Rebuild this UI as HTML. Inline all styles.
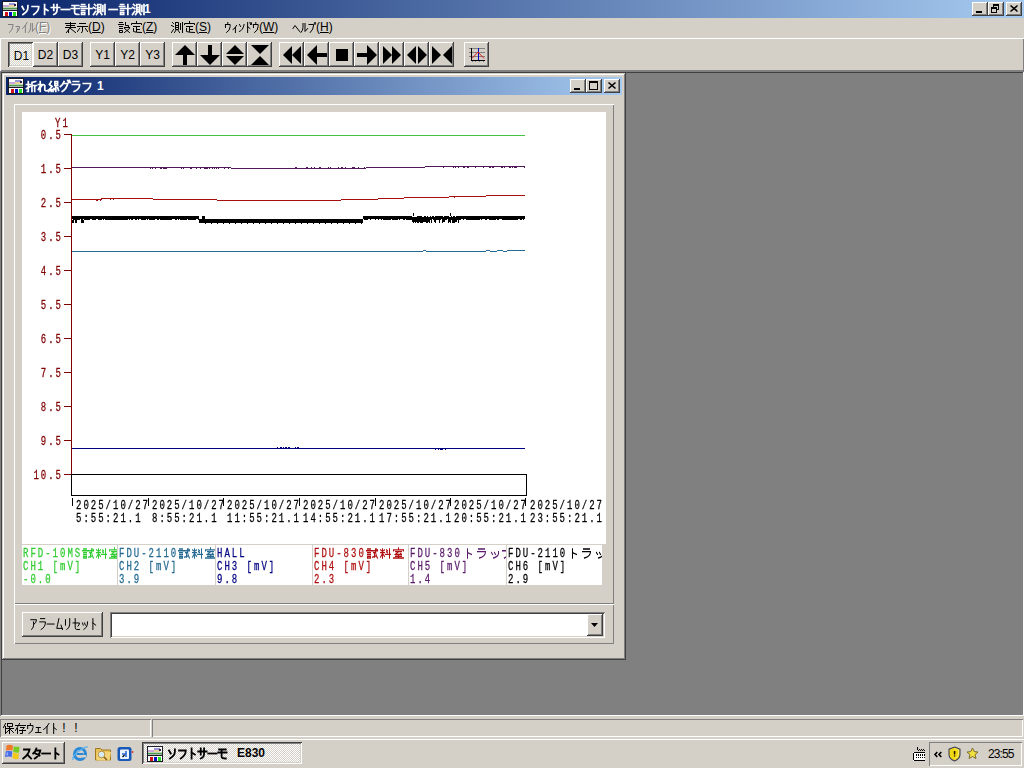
<!DOCTYPE html>
<html><head><meta charset="utf-8">
<style>
*{box-sizing:border-box;margin:0;padding:0}
html,body{width:1024px;height:768px;overflow:hidden;background:#808080;font-family:"Liberation Sans",sans-serif;font-size:12px;color:#000}
div,svg{position:absolute}
.g{display:inline-block;position:relative;vertical-align:top;overflow:visible}
.jf{display:inline-block;position:relative;text-align:center;vertical-align:top;overflow:visible;line-height:inherit;font-family:"Liberation Sans",sans-serif;letter-spacing:0}
.rb{background:#d4d0c8;box-shadow:inset -1px -1px #404040,inset 1px 1px #fff,inset -2px -2px #808080,inset 2px 2px #d4d0c8}
.pb{background-color:#fff;background-image:linear-gradient(45deg,#d4d0c8 25%,transparent 25%,transparent 75%,#d4d0c8 75%),linear-gradient(45deg,#d4d0c8 25%,transparent 25%,transparent 75%,#d4d0c8 75%);background-size:2px 2px;background-position:0 0,1px 1px;box-shadow:inset 1px 1px #404040,inset -1px -1px #fff,inset 2px 2px #808080,inset -2px -2px #d4d0c8}
.t{white-space:nowrap;line-height:1}
.mono{font-family:"Liberation Mono",monospace;font-size:9px;letter-spacing:2px;-webkit-text-stroke:0.2px currentColor;white-space:pre;line-height:9.4px;transform:scaleY(1.39);transform-origin:0 0;margin-top:1px}
.j{letter-spacing:3px}
</style></head><body>

<div style="position:absolute;left:0px;top:0px;width:1024px;height:18px;background:linear-gradient(to right,#0a246a,#a6caf0)"></div>
<svg style="position:absolute;left:2px;top:1px;" width="16" height="16" viewBox="0 0 16 16" shape-rendering="crispEdges"><rect x="0" y="0" width="16" height="16" fill="#1c1c28"/><rect x="1" y="1" width="14" height="6" fill="#ffffff"/><rect x="1" y="4" width="7" height="2" fill="#c8a8d8"/><rect x="7" y="2" width="6" height="2" fill="#9898d8"/><rect x="7" y="4" width="6" height="2" fill="#e8d098"/><rect x="12" y="3" width="2" height="2" fill="#302050"/><rect x="1" y="6" width="14" height="1" fill="#b8d8b0"/><rect x="1" y="7" width="14" height="1" fill="#509850"/><rect x="1" y="8" width="14" height="1" fill="#a8b8a8"/><rect x="1" y="10" width="14" height="5" fill="#ffffff"/><rect x="3" y="11" width="3" height="4" fill="#d01010"/><rect x="7" y="11" width="3" height="4" fill="#0010c0"/><rect x="11" y="11" width="3" height="4" fill="#20e020"/></svg>
<div class="t" style="left:20px;top:3px;color:#fff;font-weight:bold;font-size:12px;line-height:12px"><svg class="g" width="10" height="12" viewBox="0 0 12 12" preserveAspectRatio="none" style="top:0px"><path d="M2 3L4 6M9 2V4Q9 8 3 11" transform="translate(0.5 0.5)" fill="none" stroke="currentColor" stroke-width="1.7" vector-effect="non-scaling-stroke" stroke-linecap="square"/></svg><svg class="g" width="10" height="12" viewBox="0 0 12 12" preserveAspectRatio="none" style="top:0px"><path d="M2 3H10Q10 8 4 11" transform="translate(0.5 0.5)" fill="none" stroke="currentColor" stroke-width="1.7" vector-effect="non-scaling-stroke" stroke-linecap="square"/></svg><svg class="g" width="10" height="12" viewBox="0 0 12 12" preserveAspectRatio="none" style="top:0px"><path d="M5 1V11M5 5L9 7" transform="translate(0.5 0.5)" fill="none" stroke="currentColor" stroke-width="1.7" vector-effect="non-scaling-stroke" stroke-linecap="square"/></svg><svg class="g" width="10" height="12" viewBox="0 0 12 12" preserveAspectRatio="none" style="top:0px"><path d="M1 4H11M4 1V7M8 1V6Q8 10 4 11" transform="translate(0.5 0.5)" fill="none" stroke="currentColor" stroke-width="1.7" vector-effect="non-scaling-stroke" stroke-linecap="square"/></svg><svg class="g" width="10" height="12" viewBox="0 0 12 12" preserveAspectRatio="none" style="top:0px"><path d="M1 6H11" transform="translate(0.5 0.5)" fill="none" stroke="currentColor" stroke-width="1.7" vector-effect="non-scaling-stroke" stroke-linecap="square"/></svg><svg class="g" width="10" height="12" viewBox="0 0 12 12" preserveAspectRatio="none" style="top:0px"><path d="M2 2H10M1 5H11M5 2V9Q5 11 10 11" transform="translate(0.5 0.5)" fill="none" stroke="currentColor" stroke-width="1.7" vector-effect="non-scaling-stroke" stroke-linecap="square"/></svg><svg class="g" width="12.5" height="12" viewBox="0 0 12 12" preserveAspectRatio="none" style="top:0px"><path d="M1 1H4M0 3H5M1 5H4M1 7H4M1 9H4V11H1V9M5 5H11M8 1V11" transform="translate(0.5 0.5)" fill="none" stroke="currentColor" stroke-width="1.7" vector-effect="non-scaling-stroke" stroke-linecap="square"/></svg><svg class="g" width="12.5" height="12" viewBox="0 0 12 12" preserveAspectRatio="none" style="top:0px"><path d="M1 1L2 2M0 4L2 5M0 11L2 8M4 1H7V8H4V1M4 4H7M4 6H7M5 8L3 11M6 8L8 11M9 2V8M11 1V11" transform="translate(0.5 0.5)" fill="none" stroke="currentColor" stroke-width="1.7" vector-effect="non-scaling-stroke" stroke-linecap="square"/></svg><svg class="g" width="14" height="12" viewBox="0 0 12 12" preserveAspectRatio="none" style="top:0px"><path d="M3 6H10" transform="translate(0.5 0.5)" fill="none" stroke="currentColor" stroke-width="1.7" vector-effect="non-scaling-stroke" stroke-linecap="square"/></svg><svg class="g" width="12.5" height="12" viewBox="0 0 12 12" preserveAspectRatio="none" style="top:0px"><path d="M1 1H4M0 3H5M1 5H4M1 7H4M1 9H4V11H1V9M5 5H11M8 1V11" transform="translate(0.5 0.5)" fill="none" stroke="currentColor" stroke-width="1.7" vector-effect="non-scaling-stroke" stroke-linecap="square"/></svg><svg class="g" width="12.5" height="12" viewBox="0 0 12 12" preserveAspectRatio="none" style="top:0px"><path d="M1 1L2 2M0 4L2 5M0 11L2 8M4 1H7V8H4V1M4 4H7M4 6H7M5 8L3 11M6 8L8 11M9 2V8M11 1V11" transform="translate(0.5 0.5)" fill="none" stroke="currentColor" stroke-width="1.7" vector-effect="non-scaling-stroke" stroke-linecap="square"/></svg>1</div>
<div class="rb" style="left:972px;top:2px;width:16px;height:14px;"></div>
<svg style="position:absolute;left:972px;top:2px;" width="16" height="14" viewBox="0 0 16 14" shape-rendering="crispEdges"><rect x="4" y="9" width="6" height="2" fill="#000"/></svg>
<div class="rb" style="left:988px;top:2px;width:16px;height:14px;"></div>
<svg style="position:absolute;left:988px;top:2px;" width="16" height="14" viewBox="0 0 16 14" shape-rendering="crispEdges"><rect x="5" y="2" width="6" height="2" fill="#000"/><rect x="10" y="2" width="1" height="6" fill="#000"/><rect x="9" y="7" width="2" height="1" fill="#000"/><rect x="5" y="2" width="1" height="3" fill="#000"/><rect x="3" y="5" width="6" height="2" fill="#000"/><rect x="3" y="5" width="1" height="6" fill="#000"/><rect x="8" y="5" width="1" height="6" fill="#000"/><rect x="3" y="10" width="6" height="1" fill="#000"/></svg>
<div class="rb" style="left:1006px;top:2px;width:16px;height:14px;"></div>
<svg style="position:absolute;left:1006px;top:2px;" width="16" height="14" viewBox="0 0 16 14" shape-rendering="crispEdges"><path d="M4.5 3.5l7 6M11.5 3.5l-7 6" stroke="#000" stroke-width="1.6" shape-rendering="geometricPrecision"/></svg>
<div style="position:absolute;left:0px;top:18px;width:1024px;height:20px;background:#d4d0c8"></div>
<div class="t" style="left:7px;top:21px;color:#808080;text-shadow:1px 1px #fff;font-size:12px;line-height:12px"><svg class="g" width="7" height="12" viewBox="0 0 12 12" preserveAspectRatio="none" style="top:0px"><path d="M2 3H10Q10 8 4 11" transform="translate(0.5 0.5)" fill="none" stroke="currentColor" stroke-width="1" vector-effect="non-scaling-stroke" stroke-linecap="square"/></svg><svg class="g" width="7" height="12" viewBox="0 0 12 12" preserveAspectRatio="none" style="top:0px"><path d="M3 5H9Q9 8 7 9M6 7V9Q6 11 4 11" transform="translate(0.5 0.5)" fill="none" stroke="currentColor" stroke-width="1" vector-effect="non-scaling-stroke" stroke-linecap="square"/></svg><svg class="g" width="7" height="12" viewBox="0 0 12 12" preserveAspectRatio="none" style="top:0px"><path d="M10 1Q7 5 2 7M7 4V11" transform="translate(0.5 0.5)" fill="none" stroke="currentColor" stroke-width="1" vector-effect="non-scaling-stroke" stroke-linecap="square"/></svg><svg class="g" width="7" height="12" viewBox="0 0 12 12" preserveAspectRatio="none" style="top:0px"><path d="M4 2V6Q4 9 1 11M7 2V10L11 7" transform="translate(0.5 0.5)" fill="none" stroke="currentColor" stroke-width="1" vector-effect="non-scaling-stroke" stroke-linecap="square"/></svg>(<u>F</u>)</div>
<div class="t" style="left:64px;top:21px;color:#000;font-size:12px;line-height:12px"><svg class="g" width="12" height="12" viewBox="0 0 12 12" preserveAspectRatio="none" style="top:0px"><path d="M1 2H11M2 4H10M1 6H11M6 1V6M6 6L2 11M6 7L11 11M4 8V11" transform="translate(0.5 0.5)" fill="none" stroke="currentColor" stroke-width="1" vector-effect="non-scaling-stroke" stroke-linecap="square"/></svg><svg class="g" width="12" height="12" viewBox="0 0 12 12" preserveAspectRatio="none" style="top:0px"><path d="M3 2H9M1 5H11M6 5V10Q6 11 5 11M3 7L1 10M9 7L11 10" transform="translate(0.5 0.5)" fill="none" stroke="currentColor" stroke-width="1" vector-effect="non-scaling-stroke" stroke-linecap="square"/></svg>(<u>D</u>)</div>
<div class="t" style="left:118px;top:21px;color:#000;font-size:12px;line-height:12px"><svg class="g" width="12" height="12" viewBox="0 0 12 12" preserveAspectRatio="none" style="top:0px"><path d="M1 1H4M0 3H5M1 5H4M1 7H4M1 9H4V11H1V9M7 1V4H10V5M6 6H11M6 7L11 11M11 7L6 11" transform="translate(0.5 0.5)" fill="none" stroke="currentColor" stroke-width="1" vector-effect="non-scaling-stroke" stroke-linecap="square"/></svg><svg class="g" width="12" height="12" viewBox="0 0 12 12" preserveAspectRatio="none" style="top:0px"><path d="M6 0V1M1 3V2H11V3M3 5H9M6 5V10M3 7V10Q5 11 11 11M6 8H9" transform="translate(0.5 0.5)" fill="none" stroke="currentColor" stroke-width="1" vector-effect="non-scaling-stroke" stroke-linecap="square"/></svg>(<u>Z</u>)</div>
<div class="t" style="left:171px;top:21px;color:#000;font-size:12px;line-height:12px"><svg class="g" width="12" height="12" viewBox="0 0 12 12" preserveAspectRatio="none" style="top:0px"><path d="M1 1L2 2M0 4L2 5M0 11L2 8M4 1H7V8H4V1M4 4H7M4 6H7M5 8L3 11M6 8L8 11M9 2V8M11 1V11" transform="translate(0.5 0.5)" fill="none" stroke="currentColor" stroke-width="1" vector-effect="non-scaling-stroke" stroke-linecap="square"/></svg><svg class="g" width="12" height="12" viewBox="0 0 12 12" preserveAspectRatio="none" style="top:0px"><path d="M6 0V1M1 3V2H11V3M3 5H9M6 5V10M3 7V10Q5 11 11 11M6 8H9" transform="translate(0.5 0.5)" fill="none" stroke="currentColor" stroke-width="1" vector-effect="non-scaling-stroke" stroke-linecap="square"/></svg>(<u>S</u>)</div>
<div class="t" style="left:224px;top:21px;color:#000;font-size:12px;line-height:12px"><svg class="g" width="7" height="12" viewBox="0 0 12 12" preserveAspectRatio="none" style="top:0px"><path d="M6 1V3M2 3H10V5Q10 9 4 11M2 3V6" transform="translate(0.5 0.5)" fill="none" stroke="currentColor" stroke-width="1" vector-effect="non-scaling-stroke" stroke-linecap="square"/></svg><svg class="g" width="7" height="12" viewBox="0 0 12 12" preserveAspectRatio="none" style="top:0px"><path d="M9 4Q7 7 3 8M7 6V11" transform="translate(0.5 0.5)" fill="none" stroke="currentColor" stroke-width="1" vector-effect="non-scaling-stroke" stroke-linecap="square"/></svg><svg class="g" width="7" height="12" viewBox="0 0 12 12" preserveAspectRatio="none" style="top:0px"><path d="M2 3L4 5M2 10Q8 9 10 3" transform="translate(0.5 0.5)" fill="none" stroke="currentColor" stroke-width="1" vector-effect="non-scaling-stroke" stroke-linecap="square"/></svg><svg class="g" width="7" height="12" viewBox="0 0 12 12" preserveAspectRatio="none" style="top:0px"><path d="M4 1V11M4 5L8 7M8 1L9 3M10 1L11 3" transform="translate(0.5 0.5)" fill="none" stroke="currentColor" stroke-width="1" vector-effect="non-scaling-stroke" stroke-linecap="square"/></svg><svg class="g" width="7" height="12" viewBox="0 0 12 12" preserveAspectRatio="none" style="top:0px"><path d="M6 1V3M2 3H10V5Q10 9 4 11M2 3V6" transform="translate(0.5 0.5)" fill="none" stroke="currentColor" stroke-width="1" vector-effect="non-scaling-stroke" stroke-linecap="square"/></svg>(<u>W</u>)</div>
<div class="t" style="left:292px;top:21px;color:#000;font-size:12px;line-height:12px"><svg class="g" width="8" height="12" viewBox="0 0 12 12" preserveAspectRatio="none" style="top:0px"><path d="M1 7L4 4L11 10" transform="translate(0.5 0.5)" fill="none" stroke="currentColor" stroke-width="1" vector-effect="non-scaling-stroke" stroke-linecap="square"/></svg><svg class="g" width="8" height="12" viewBox="0 0 12 12" preserveAspectRatio="none" style="top:0px"><path d="M4 2V6Q4 9 1 11M7 2V10L11 7" transform="translate(0.5 0.5)" fill="none" stroke="currentColor" stroke-width="1" vector-effect="non-scaling-stroke" stroke-linecap="square"/></svg><svg class="g" width="8" height="12" viewBox="0 0 12 12" preserveAspectRatio="none" style="top:0px"><path d="M1 3H8Q8 8 3 11M10 1A1 1 0 1 1 10 3A1 1 0 1 1 10 1" transform="translate(0.5 0.5)" fill="none" stroke="currentColor" stroke-width="1" vector-effect="non-scaling-stroke" stroke-linecap="square"/></svg>(<u>H</u>)</div>
<div style="position:absolute;left:0px;top:38px;width:1024px;height:33px;background:#d4d0c8;box-shadow:inset 1px 1px #fff,inset -1px -1px #808080"></div>
<div class="pb" style="left:8px;top:42px;width:25px;height:25px;"></div>
<div class="t" style="left:9px;top:50px;width:25px;text-align:center;font-size:12px">D1</div>
<div class="rb" style="left:33px;top:42px;width:25px;height:25px;"></div>
<div class="t" style="left:33px;top:49px;width:25px;text-align:center;font-size:12px">D2</div>
<div class="rb" style="left:58px;top:42px;width:25px;height:25px;"></div>
<div class="t" style="left:58px;top:49px;width:25px;text-align:center;font-size:12px">D3</div>
<div class="rb" style="left:90px;top:42px;width:25px;height:25px;"></div>
<div class="t" style="left:90px;top:49px;width:25px;text-align:center;font-size:12px">Y1</div>
<div class="rb" style="left:115px;top:42px;width:25px;height:25px;"></div>
<div class="t" style="left:115px;top:49px;width:25px;text-align:center;font-size:12px">Y2</div>
<div class="rb" style="left:140px;top:42px;width:25px;height:25px;"></div>
<div class="t" style="left:140px;top:49px;width:25px;text-align:center;font-size:12px">Y3</div>
<div class="rb" style="left:172px;top:42px;width:25px;height:25px;"></div>
<svg style="position:absolute;left:172px;top:42px;" width="25" height="25" viewBox="0 0 25 25" shape-rendering="crispEdges"><path d="M3 13L13 3L23 13Z" fill="#000" shape-rendering="geometricPrecision"/><rect x="11" y="13" width="4" height="10" fill="#000"/></svg>
<div class="rb" style="left:197px;top:42px;width:25px;height:25px;"></div>
<svg style="position:absolute;left:197px;top:42px;" width="25" height="25" viewBox="0 0 25 25" shape-rendering="crispEdges"><rect x="11" y="3" width="4" height="10" fill="#000"/><path d="M3 13L23 13L13 23Z" fill="#000" shape-rendering="geometricPrecision"/></svg>
<div class="rb" style="left:222px;top:42px;width:25px;height:25px;"></div>
<svg style="position:absolute;left:222px;top:42px;" width="25" height="25" viewBox="0 0 25 25" shape-rendering="crispEdges"><path d="M4 12L13 3L22 12Z" fill="#000" shape-rendering="geometricPrecision"/><path d="M4 14L22 14L13 23Z" fill="#000" shape-rendering="geometricPrecision"/></svg>
<div class="rb" style="left:247px;top:42px;width:25px;height:25px;"></div>
<svg style="position:absolute;left:247px;top:42px;" width="25" height="25" viewBox="0 0 25 25" shape-rendering="crispEdges"><path d="M4 3L22 3L13 12Z" fill="#000" shape-rendering="geometricPrecision"/><path d="M13 14L22 23L4 23Z" fill="#000" shape-rendering="geometricPrecision"/></svg>
<div class="rb" style="left:279px;top:42px;width:25px;height:25px;"></div>
<svg style="position:absolute;left:279px;top:42px;" width="25" height="25" viewBox="0 0 25 25" shape-rendering="crispEdges"><path d="M4 13L13 4L13 22Z" fill="#000" shape-rendering="geometricPrecision"/><path d="M13 13L22 4L22 22Z" fill="#000" shape-rendering="geometricPrecision"/></svg>
<div class="rb" style="left:304px;top:42px;width:25px;height:25px;"></div>
<svg style="position:absolute;left:304px;top:42px;" width="25" height="25" viewBox="0 0 25 25" shape-rendering="crispEdges"><path d="M3 13L13 3L13 23Z" fill="#000" shape-rendering="geometricPrecision"/><rect x="13" y="11" width="10" height="4" fill="#000"/></svg>
<div class="rb" style="left:329px;top:42px;width:25px;height:25px;"></div>
<svg style="position:absolute;left:329px;top:42px;" width="25" height="25" viewBox="0 0 25 25" shape-rendering="crispEdges"><rect x="7" y="7" width="12" height="12" fill="#000"/></svg>
<div class="rb" style="left:354px;top:42px;width:25px;height:25px;"></div>
<svg style="position:absolute;left:354px;top:42px;" width="25" height="25" viewBox="0 0 25 25" shape-rendering="crispEdges"><rect x="3" y="11" width="10" height="4" fill="#000"/><path d="M13 3L23 13L13 23Z" fill="#000" shape-rendering="geometricPrecision"/></svg>
<div class="rb" style="left:379px;top:42px;width:25px;height:25px;"></div>
<svg style="position:absolute;left:379px;top:42px;" width="25" height="25" viewBox="0 0 25 25" shape-rendering="crispEdges"><path d="M4 4L13 13L4 22Z" fill="#000" shape-rendering="geometricPrecision"/><path d="M13 4L22 13L13 22Z" fill="#000" shape-rendering="geometricPrecision"/></svg>
<div class="rb" style="left:404px;top:42px;width:25px;height:25px;"></div>
<svg style="position:absolute;left:404px;top:42px;" width="25" height="25" viewBox="0 0 25 25" shape-rendering="crispEdges"><path d="M3 13L12 4L12 22Z" fill="#000" shape-rendering="geometricPrecision"/><path d="M14 4L23 13L14 22Z" fill="#000" shape-rendering="geometricPrecision"/></svg>
<div class="rb" style="left:429px;top:42px;width:25px;height:25px;"></div>
<svg style="position:absolute;left:429px;top:42px;" width="25" height="25" viewBox="0 0 25 25" shape-rendering="crispEdges"><path d="M3 4L12 13L3 22Z" fill="#000" shape-rendering="geometricPrecision"/><path d="M23 4L14 13L23 22Z" fill="#000" shape-rendering="geometricPrecision"/></svg>
<div class="rb" style="left:464px;top:42px;width:25px;height:25px;"></div>
<svg style="position:absolute;left:464px;top:42px;" width="25" height="25" viewBox="0 0 25 25" shape-rendering="crispEdges"><rect x="5" y="6" width="16" height="1" fill="#808080"/><rect x="5" y="10" width="16" height="1" fill="#808080"/><rect x="5" y="14" width="16" height="1" fill="#808080"/><rect x="7" y="6" width="1" height="13" fill="#000"/><rect x="7" y="18" width="14" height="1" fill="#000"/><rect x="14" y="6" width="1" height="12" fill="#0000c0"/><path d="M8 16.5L14 10L20 16.5" stroke="#e02020" stroke-width="1" fill="none" shape-rendering="geometricPrecision"/><rect x="8" y="19" width="1" height="1" fill="#808080"/><rect x="11" y="19" width="1" height="1" fill="#808080"/><rect x="15" y="19" width="1" height="1" fill="#808080"/><rect x="19" y="19" width="1" height="1" fill="#808080"/></svg>
<div style="position:absolute;left:0px;top:71px;width:1024px;height:645px;box-shadow:inset 1px 1px #808080,inset -1px -1px #fff,inset 2px 2px #404040;background:#808080"></div>
<div style="position:absolute;left:2px;top:73px;width:624px;height:587px;background:#d4d0c8;box-shadow:inset -1px -1px #404040,inset 1px 1px #d4d0c8,inset -2px -2px #808080,inset 2px 2px #fff"></div>
<div style="position:absolute;left:6px;top:77px;width:616px;height:18px;background:linear-gradient(to right,#0a246a,#a6caf0)"></div>
<svg style="position:absolute;left:8px;top:78px;" width="16" height="16" viewBox="0 0 16 16" shape-rendering="crispEdges"><rect x="0" y="0" width="16" height="16" fill="#1c1c28"/><rect x="1" y="1" width="14" height="6" fill="#ffffff"/><rect x="1" y="4" width="7" height="2" fill="#c8a8d8"/><rect x="7" y="2" width="6" height="2" fill="#9898d8"/><rect x="7" y="4" width="6" height="2" fill="#e8d098"/><rect x="12" y="3" width="2" height="2" fill="#302050"/><rect x="1" y="6" width="14" height="1" fill="#b8d8b0"/><rect x="1" y="7" width="14" height="1" fill="#509850"/><rect x="1" y="8" width="14" height="1" fill="#a8b8a8"/><rect x="1" y="10" width="14" height="5" fill="#ffffff"/><rect x="3" y="11" width="3" height="4" fill="#d01010"/><rect x="7" y="11" width="3" height="4" fill="#0010c0"/><rect x="11" y="11" width="3" height="4" fill="#20e020"/></svg>
<div class="t" style="left:26px;top:80px;color:#fff;font-weight:bold;font-size:12px;line-height:12px"><svg class="g" width="11" height="12" viewBox="0 0 12 12" preserveAspectRatio="none" style="top:0px"><path d="M0 4H4M2 1V11H1M0 8L4 6M10 1L6 2V11M6 5H11M9 5V11" transform="translate(0.5 0.5)" fill="none" stroke="currentColor" stroke-width="1.7" vector-effect="non-scaling-stroke" stroke-linecap="square"/></svg><svg class="g" width="11" height="12" viewBox="0 0 12 12" preserveAspectRatio="none" style="top:0px"><path d="M3 1V11M1 4H4L1 9M4 6Q6 3 8 5V9Q8 11 11 10" transform="translate(0.5 0.5)" fill="none" stroke="currentColor" stroke-width="1.7" vector-effect="non-scaling-stroke" stroke-linecap="square"/></svg><svg class="g" width="11" height="12" viewBox="0 0 12 12" preserveAspectRatio="none" style="top:0px"><path d="M3 1L1 4L4 6L1 9H5M3 9V11M1 10L0 11M5 10L5 11M7 1H10V5H7V1M7 3H10M8 5V11M6 8L7 9M10 7L11 10" transform="translate(0.5 0.5)" fill="none" stroke="currentColor" stroke-width="1.7" vector-effect="non-scaling-stroke" stroke-linecap="square"/></svg><svg class="g" width="11" height="12" viewBox="0 0 12 12" preserveAspectRatio="none" style="top:0px"><path d="M5 1Q4 4 1 6M4 3H9Q8 8 3 11M9 0L10 2M11 0L12 2" transform="translate(0.5 0.5)" fill="none" stroke="currentColor" stroke-width="1.7" vector-effect="non-scaling-stroke" stroke-linecap="square"/></svg><svg class="g" width="11" height="12" viewBox="0 0 12 12" preserveAspectRatio="none" style="top:0px"><path d="M3 1H9M2 4H10Q10 9 4 11" transform="translate(0.5 0.5)" fill="none" stroke="currentColor" stroke-width="1.7" vector-effect="non-scaling-stroke" stroke-linecap="square"/></svg><svg class="g" width="11" height="12" viewBox="0 0 12 12" preserveAspectRatio="none" style="top:0px"><path d="M2 3H10Q10 8 4 11" transform="translate(0.5 0.5)" fill="none" stroke="currentColor" stroke-width="1.7" vector-effect="non-scaling-stroke" stroke-linecap="square"/></svg><span style="margin-left:5px">1</span></div>
<div class="rb" style="left:570px;top:79px;width:16px;height:14px;"></div>
<svg style="position:absolute;left:570px;top:79px;" width="16" height="14" viewBox="0 0 16 14" shape-rendering="crispEdges"><rect x="4" y="9" width="6" height="2" fill="#000"/></svg>
<div class="rb" style="left:586px;top:79px;width:16px;height:14px;"></div>
<svg style="position:absolute;left:586px;top:79px;" width="16" height="14" viewBox="0 0 16 14" shape-rendering="crispEdges"><rect x="3" y="2" width="9" height="2" fill="#000"/><rect x="3" y="2" width="1" height="9" fill="#000"/><rect x="11" y="2" width="1" height="9" fill="#000"/><rect x="3" y="10" width="9" height="1" fill="#000"/></svg>
<div class="rb" style="left:604px;top:79px;width:16px;height:14px;"></div>
<svg style="position:absolute;left:604px;top:79px;" width="16" height="14" viewBox="0 0 16 14" shape-rendering="crispEdges"><path d="M4.5 3.5l7 6M11.5 3.5l-7 6" stroke="#000" stroke-width="1.6" shape-rendering="geometricPrecision"/></svg>
<div style="position:absolute;left:14px;top:104px;width:600px;height:500px;box-shadow:inset 1px 1px #fff,inset -1px -1px #808080"></div>
<div style="position:absolute;left:22px;top:112px;width:584px;height:432px;background:#fff"></div>
<div style="position:absolute;left:14px;top:604px;width:600px;height:40px;box-shadow:inset 1px 1px #fff,inset -1px -1px #808080"></div>
<div class="rb" style="left:22px;top:612px;width:81px;height:25px;"></div>
<div class="t" style="left:29px;top:618px;font-size:12px;line-height:12px"><svg class="g" width="8.5" height="13" viewBox="0 0 12 12" preserveAspectRatio="none" style="top:-1px"><path d="M2 2H10Q10 5 7 6M6 4V7Q6 10 3 11" transform="translate(0.5 0.5)" fill="none" stroke="currentColor" stroke-width="1" vector-effect="non-scaling-stroke" stroke-linecap="square"/></svg><svg class="g" width="8.5" height="13" viewBox="0 0 12 12" preserveAspectRatio="none" style="top:-1px"><path d="M3 1H9M2 4H10Q10 9 4 11" transform="translate(0.5 0.5)" fill="none" stroke="currentColor" stroke-width="1" vector-effect="non-scaling-stroke" stroke-linecap="square"/></svg><svg class="g" width="8.5" height="13" viewBox="0 0 12 12" preserveAspectRatio="none" style="top:-1px"><path d="M1 6H11" transform="translate(0.5 0.5)" fill="none" stroke="currentColor" stroke-width="1" vector-effect="non-scaling-stroke" stroke-linecap="square"/></svg><svg class="g" width="8.5" height="13" viewBox="0 0 12 12" preserveAspectRatio="none" style="top:-1px"><path d="M5 1Q3 7 2 10H10M8 7L10 11" transform="translate(0.5 0.5)" fill="none" stroke="currentColor" stroke-width="1" vector-effect="non-scaling-stroke" stroke-linecap="square"/></svg><svg class="g" width="8.5" height="13" viewBox="0 0 12 12" preserveAspectRatio="none" style="top:-1px"><path d="M3 2V7M9 1V6Q9 10 5 11" transform="translate(0.5 0.5)" fill="none" stroke="currentColor" stroke-width="1" vector-effect="non-scaling-stroke" stroke-linecap="square"/></svg><svg class="g" width="8.5" height="13" viewBox="0 0 12 12" preserveAspectRatio="none" style="top:-1px"><path d="M1 5H10Q10 7 8 8M4 1V9Q4 11 6 11H10" transform="translate(0.5 0.5)" fill="none" stroke="currentColor" stroke-width="1" vector-effect="non-scaling-stroke" stroke-linecap="square"/></svg><svg class="g" width="8.5" height="13" viewBox="0 0 12 12" preserveAspectRatio="none" style="top:-1px"><path d="M3 5L4 7M6 5L7 7M10 4V6Q10 9 5 11" transform="translate(0.5 0.5)" fill="none" stroke="currentColor" stroke-width="1" vector-effect="non-scaling-stroke" stroke-linecap="square"/></svg><svg class="g" width="8.5" height="13" viewBox="0 0 12 12" preserveAspectRatio="none" style="top:-1px"><path d="M5 1V11M5 5L9 7" transform="translate(0.5 0.5)" fill="none" stroke="currentColor" stroke-width="1" vector-effect="non-scaling-stroke" stroke-linecap="square"/></svg></div>
<div style="position:absolute;left:110px;top:612px;width:495px;height:26px;background:#fff;box-shadow:inset 1px 1px #808080,inset -1px -1px #fff,inset 2px 2px #404040,inset -2px -2px #d4d0c8"></div>
<div class="rb" style="left:587px;top:614px;width:16px;height:22px;"></div>
<svg style="position:absolute;left:587px;top:614px;" width="16" height="22" viewBox="0 0 16 22" shape-rendering="crispEdges"><path d="M4 9h7l-3.5 4z" fill="#000" shape-rendering="geometricPrecision"/></svg>
<div style="position:absolute;left:0px;top:716px;width:1024px;height:23px;background:#d4d0c8"></div>
<div style="position:absolute;left:0px;top:719px;width:151px;height:18px;box-shadow:inset 1px 1px #808080,inset -1px -1px #fff"></div>
<div style="position:absolute;left:152px;top:719px;width:871px;height:18px;box-shadow:inset 1px 1px #808080,inset -1px -1px #fff"></div>
<div class="t" style="left:2px;top:722px;font-size:12px;line-height:12px"><svg class="g" width="12" height="12" viewBox="0 0 12 12" preserveAspectRatio="none" style="top:0px"><path d="M3 1L1 5M3 4V11M5 1H10V4H5V1M4 6H11M7 4V11M7 7L4 10M8 7L11 10" transform="translate(0.5 0.5)" fill="none" stroke="currentColor" stroke-width="1" vector-effect="non-scaling-stroke" stroke-linecap="square"/></svg><svg class="g" width="12" height="12" viewBox="0 0 12 12" preserveAspectRatio="none" style="top:0px"><path d="M1 3H11M5 1L1 8M3 6V11M6 5H10L8 7V11H6M5 8H11" transform="translate(0.5 0.5)" fill="none" stroke="currentColor" stroke-width="1" vector-effect="non-scaling-stroke" stroke-linecap="square"/></svg><svg class="g" width="8" height="12" viewBox="0 0 12 12" preserveAspectRatio="none" style="top:0px"><path d="M6 1V3M2 3H10V5Q10 9 4 11M2 3V6" transform="translate(0.5 0.5)" fill="none" stroke="currentColor" stroke-width="1" vector-effect="non-scaling-stroke" stroke-linecap="square"/></svg><svg class="g" width="8" height="12" viewBox="0 0 12 12" preserveAspectRatio="none" style="top:0px"><path d="M3 5H9M6 5V10M2 10H10" transform="translate(0.5 0.5)" fill="none" stroke="currentColor" stroke-width="1" vector-effect="non-scaling-stroke" stroke-linecap="square"/></svg><svg class="g" width="8" height="12" viewBox="0 0 12 12" preserveAspectRatio="none" style="top:0px"><path d="M10 1Q7 5 2 7M7 4V11" transform="translate(0.5 0.5)" fill="none" stroke="currentColor" stroke-width="1" vector-effect="non-scaling-stroke" stroke-linecap="square"/></svg><svg class="g" width="8" height="12" viewBox="0 0 12 12" preserveAspectRatio="none" style="top:0px"><path d="M5 1V11M5 5L9 7" transform="translate(0.5 0.5)" fill="none" stroke="currentColor" stroke-width="1" vector-effect="non-scaling-stroke" stroke-linecap="square"/></svg><span class="jf" style="width:12px">!</span><span class="jf" style="width:12px">!</span></div>
<div style="position:absolute;left:0px;top:739px;width:1024px;height:29px;background:#d4d0c8;box-shadow:inset 0 1px #fff"></div>
<div class="rb" style="left:2px;top:742px;width:63px;height:22px;"></div>
<svg style="position:absolute;left:3px;top:743px;" width="18" height="17" viewBox="0 0 18 17" shape-rendering="crispEdges"><g shape-rendering="geometricPrecision"><path d="M3.5 2.5 Q6.5 1.2 10 2.5 L9.5 7.5 Q6.3 6.5 3 7.5Z" fill="#f07828"/><path d="M10.8 3.2 Q13.5 4.2 16.5 3.5 L16 9.5 Q13 10 10.2 8.8Z" fill="#78cc20"/><path d="M2.8 8.3 Q6 7.3 9.3 8.4 L8.7 14 Q5.5 13 2 14Z" fill="#4a6ee8"/><path d="M10.1 9.6 Q13 10.8 15.9 10.2 L15.3 16 Q12.5 16.5 9.4 15.2Z" fill="#f4c818"/><path d="M4.5 9.5L4 12.5" stroke="#a8c0ff" stroke-width="1.2"/></g></svg>
<div class="t" style="left:22px;top:747px;font-weight:bold;font-size:12px;line-height:12px"><svg class="g" width="9.5" height="12" viewBox="0 0 12 12" preserveAspectRatio="none" style="top:0px"><path d="M2 2H9Q8 7 1 11M6 7L11 11" transform="translate(0.5 0.5)" fill="none" stroke="currentColor" stroke-width="1.8" vector-effect="non-scaling-stroke" stroke-linecap="square"/></svg><svg class="g" width="9.5" height="12" viewBox="0 0 12 12" preserveAspectRatio="none" style="top:0px"><path d="M5 1Q4 4 1 6M4 3H10Q9 8 3 11M4 6L9 8" transform="translate(0.5 0.5)" fill="none" stroke="currentColor" stroke-width="1.8" vector-effect="non-scaling-stroke" stroke-linecap="square"/></svg><svg class="g" width="9.5" height="12" viewBox="0 0 12 12" preserveAspectRatio="none" style="top:0px"><path d="M1 6H11" transform="translate(0.5 0.5)" fill="none" stroke="currentColor" stroke-width="1.8" vector-effect="non-scaling-stroke" stroke-linecap="square"/></svg><svg class="g" width="9.5" height="12" viewBox="0 0 12 12" preserveAspectRatio="none" style="top:0px"><path d="M5 1V11M5 5L9 7" transform="translate(0.5 0.5)" fill="none" stroke="currentColor" stroke-width="1.8" vector-effect="non-scaling-stroke" stroke-linecap="square"/></svg></div>
<svg style="position:absolute;left:71px;top:745px;" width="18" height="17" viewBox="0 0 18 17" shape-rendering="crispEdges"><g shape-rendering="geometricPrecision"><circle cx="9" cy="9" r="5.5" fill="none" stroke="#2a88d8" stroke-width="3"/><rect x="5.5" y="8" width="7" height="2" fill="#2a88d8"/><rect x="11" y="10" width="4" height="2.5" fill="#d4d0c8"/><path d="M2 15 Q1 11 8 6 Q15 1 17 2" fill="none" stroke="#58b0f0" stroke-width="1.3"/></g></svg>
<svg style="position:absolute;left:95px;top:747px;" width="17" height="14" viewBox="0 0 17 14" shape-rendering="crispEdges"><g shape-rendering="geometricPrecision"><path d="M0.5 1.5h5l1.5 1.5h8.5v10h-15z" fill="#e8c058" stroke="#a07820" stroke-width="1"/><path d="M2 5h14l-1.5 8.5h-13z" fill="#f4d478"/><circle cx="6.5" cy="7.5" r="3.3" fill="#d8ecf8" stroke="#b89040" stroke-width="1"/><path d="M9 10l3 3" stroke="#806020" stroke-width="1.5"/></g></svg>
<svg style="position:absolute;left:117px;top:746px;" width="17" height="16" viewBox="0 0 17 16" shape-rendering="crispEdges"><g shape-rendering="geometricPrecision"><rect x="0.5" y="1" width="14" height="14" rx="2.5" fill="#1a58b8"/><rect x="3" y="3.5" width="9" height="9.5" rx="1" fill="#f0f6ff"/><path d="M5 8h4M9 5v6" stroke="#2a6ad0" stroke-width="1.6"/><path d="M5.5 11l2-2" stroke="#000" stroke-width="1.2"/><circle cx="15.5" cy="6" r="1" fill="#e03030"/></g></svg>
<div class="pb" style="left:142px;top:742px;width:160px;height:22px;"></div>
<svg style="position:absolute;left:147px;top:746px;" width="16" height="16" viewBox="0 0 16 16" shape-rendering="crispEdges"><rect x="0" y="0" width="16" height="16" fill="#1c1c28"/><rect x="1" y="1" width="14" height="6" fill="#ffffff"/><rect x="1" y="4" width="7" height="2" fill="#c8a8d8"/><rect x="7" y="2" width="6" height="2" fill="#9898d8"/><rect x="7" y="4" width="6" height="2" fill="#e8d098"/><rect x="12" y="3" width="2" height="2" fill="#302050"/><rect x="1" y="6" width="14" height="1" fill="#b8d8b0"/><rect x="1" y="7" width="14" height="1" fill="#509850"/><rect x="1" y="8" width="14" height="1" fill="#a8b8a8"/><rect x="1" y="10" width="14" height="5" fill="#ffffff"/><rect x="3" y="11" width="3" height="4" fill="#d01010"/><rect x="7" y="11" width="3" height="4" fill="#0010c0"/><rect x="11" y="11" width="3" height="4" fill="#20e020"/></svg>
<div class="t" style="left:167px;top:747px;font-weight:bold;font-size:12px;line-height:12px"><svg class="g" width="10" height="12" viewBox="0 0 12 12" preserveAspectRatio="none" style="top:0px"><path d="M2 3L4 6M9 2V4Q9 8 3 11" transform="translate(0.5 0.5)" fill="none" stroke="currentColor" stroke-width="1.8" vector-effect="non-scaling-stroke" stroke-linecap="square"/></svg><svg class="g" width="10" height="12" viewBox="0 0 12 12" preserveAspectRatio="none" style="top:0px"><path d="M2 3H10Q10 8 4 11" transform="translate(0.5 0.5)" fill="none" stroke="currentColor" stroke-width="1.8" vector-effect="non-scaling-stroke" stroke-linecap="square"/></svg><svg class="g" width="10" height="12" viewBox="0 0 12 12" preserveAspectRatio="none" style="top:0px"><path d="M5 1V11M5 5L9 7" transform="translate(0.5 0.5)" fill="none" stroke="currentColor" stroke-width="1.8" vector-effect="non-scaling-stroke" stroke-linecap="square"/></svg><svg class="g" width="10" height="12" viewBox="0 0 12 12" preserveAspectRatio="none" style="top:0px"><path d="M1 4H11M4 1V7M8 1V6Q8 10 4 11" transform="translate(0.5 0.5)" fill="none" stroke="currentColor" stroke-width="1.8" vector-effect="non-scaling-stroke" stroke-linecap="square"/></svg><svg class="g" width="10" height="12" viewBox="0 0 12 12" preserveAspectRatio="none" style="top:0px"><path d="M1 6H11" transform="translate(0.5 0.5)" fill="none" stroke="currentColor" stroke-width="1.8" vector-effect="non-scaling-stroke" stroke-linecap="square"/></svg><svg class="g" width="10" height="12" viewBox="0 0 12 12" preserveAspectRatio="none" style="top:0px"><path d="M2 2H10M1 5H11M5 2V9Q5 11 10 11" transform="translate(0.5 0.5)" fill="none" stroke="currentColor" stroke-width="1.8" vector-effect="non-scaling-stroke" stroke-linecap="square"/></svg>&nbsp;&nbsp;&nbsp;E830</div>
<svg style="position:absolute;left:912px;top:746px;" width="14" height="16" viewBox="0 0 14 16" shape-rendering="crispEdges"><rect x="1" y="6" width="12" height="9" fill="#fff"/><rect x="2" y="6" width="11" height="1" fill="#000"/><rect x="2" y="14" width="11" height="1" fill="#000"/><rect x="1" y="7" width="1" height="7" fill="#000"/><rect x="4" y="8" width="1" height="2" fill="#000"/><rect x="6" y="8" width="1" height="2" fill="#000"/><rect x="8" y="8" width="1" height="2" fill="#000"/><rect x="10" y="8" width="1" height="2" fill="#000"/><rect x="12" y="8" width="1" height="2" fill="#000"/><rect x="4" y="11" width="1" height="1" fill="#000"/><rect x="6" y="11" width="1" height="1" fill="#000"/><rect x="8" y="11" width="1" height="1" fill="#000"/><rect x="10" y="11" width="1" height="1" fill="#000"/><rect x="12" y="11" width="1" height="1" fill="#000"/><rect x="5" y="1" width="1" height="3" fill="#000"/><rect x="6" y="4" width="1" height="1" fill="#000"/><rect x="7" y="3" width="1" height="1" fill="#000"/><rect x="8" y="4" width="1" height="1" fill="#000"/><rect x="9" y="3" width="1" height="1" fill="#000"/><rect x="10" y="4" width="1" height="1" fill="#000"/><rect x="11" y="3" width="1" height="1" fill="#000"/><rect x="12" y="4" width="1" height="1" fill="#000"/></svg>
<div style="position:absolute;left:929px;top:742px;width:93px;height:24px;box-shadow:inset 1px 1px #808080,inset -1px -1px #fff"></div>
<svg style="position:absolute;left:933px;top:751px;" width="11" height="7" viewBox="0 0 11 7" shape-rendering="crispEdges"><path d="M4.3 1L2 3.5L4.3 6M8.3 1L6 3.5L8.3 6" stroke="#000" stroke-width="1.6" fill="none" shape-rendering="geometricPrecision"/></svg>
<svg style="position:absolute;left:948px;top:746px;" width="14" height="16" viewBox="0 0 14 16" shape-rendering="crispEdges"><g shape-rendering="geometricPrecision"><path d="M6.5 1L12 3.2v5.3q0 4.2-5.5 6.5Q1 12.7 1 8.5V3.2z" fill="#f2d810" stroke="#404058" stroke-width="1.1"/><path d="M6.5 2.5L10.5 4v4q0 3-4 5" fill="none" stroke="#f8f080" stroke-width="0.8"/><rect x="5.8" y="5" width="1.5" height="3.5" fill="#201000"/><rect x="5.9" y="9.3" width="1.3" height="1.3" fill="#402000"/></g></svg>
<svg style="position:absolute;left:966px;top:747px;" width="13" height="13" viewBox="0 0 13 13" shape-rendering="crispEdges"><path d="M6.5 1l1.7 3.6 3.8.4-2.9 2.6.9 3.9-3.5-2-3.5 2 .9-3.9L1 5l3.8-.4z" fill="#f0e040" stroke="#706020" stroke-width="0.9" stroke-linejoin="round" shape-rendering="geometricPrecision"/></svg>
<div class="t" style="left:988px;top:748px;font-size:12px;letter-spacing:-0.9px">23:55</div>
<svg style="position:absolute;left:0px;top:0px;pointer-events:none" width="1024" height="768" viewBox="0 0 1024 768" shape-rendering="crispEdges"><rect x="71" y="134" width="1" height="341" fill="#800000"/><rect x="64" y="134" width="7" height="1" fill="#800000"/><rect x="64" y="168" width="7" height="1" fill="#800000"/><rect x="64" y="202" width="7" height="1" fill="#800000"/><rect x="64" y="236" width="7" height="1" fill="#800000"/><rect x="64" y="270" width="7" height="1" fill="#800000"/><rect x="64" y="304" width="7" height="1" fill="#800000"/><rect x="64" y="338" width="7" height="1" fill="#800000"/><rect x="64" y="372" width="7" height="1" fill="#800000"/><rect x="64" y="406" width="7" height="1" fill="#800000"/><rect x="64" y="440" width="7" height="1" fill="#800000"/><rect x="64" y="474" width="7" height="1" fill="#800000"/><rect x="71" y="474" width="456" height="1" fill="#000"/><rect x="71" y="495" width="456" height="1" fill="#000"/><rect x="71" y="474" width="1" height="22" fill="#000"/><rect x="526" y="474" width="1" height="22" fill="#000"/><rect x="72" y="498" width="1" height="8" fill="#000"/><rect x="148" y="498" width="1" height="8" fill="#000"/><rect x="223" y="498" width="1" height="8" fill="#000"/><rect x="299" y="498" width="1" height="8" fill="#000"/><rect x="375" y="498" width="1" height="8" fill="#000"/><rect x="450" y="498" width="1" height="8" fill="#000"/><rect x="525" y="498" width="1" height="8" fill="#000"/><rect x="72" y="135" width="453" height="1" fill="#44c044"/><rect x="72" y="167" width="159" height="1" fill="#501858"/><rect x="231" y="168" width="135" height="1" fill="#501858"/><rect x="366" y="167" width="59" height="1" fill="#501858"/><rect x="425" y="166" width="100" height="1" fill="#501858"/><rect x="150" y="168" width="1" height="1" fill="#501858"/><rect x="152" y="168" width="1" height="1" fill="#501858"/><rect x="155" y="168" width="1" height="1" fill="#501858"/><rect x="160" y="168" width="1" height="1" fill="#501858"/><rect x="161" y="168" width="1" height="1" fill="#501858"/><rect x="163" y="168" width="1" height="1" fill="#501858"/><rect x="164" y="168" width="1" height="1" fill="#501858"/><rect x="165" y="168" width="1" height="1" fill="#501858"/><rect x="166" y="168" width="1" height="1" fill="#501858"/><rect x="181" y="168" width="1" height="1" fill="#501858"/><rect x="183" y="168" width="1" height="1" fill="#501858"/><rect x="190" y="168" width="1" height="1" fill="#501858"/><rect x="191" y="168" width="1" height="1" fill="#501858"/><rect x="196" y="168" width="1" height="1" fill="#501858"/><rect x="200" y="168" width="1" height="1" fill="#501858"/><rect x="204" y="168" width="1" height="1" fill="#501858"/><rect x="205" y="168" width="1" height="1" fill="#501858"/><rect x="206" y="168" width="1" height="1" fill="#501858"/><rect x="207" y="168" width="1" height="1" fill="#501858"/><rect x="209" y="168" width="1" height="1" fill="#501858"/><rect x="212" y="168" width="1" height="1" fill="#501858"/><rect x="214" y="168" width="1" height="1" fill="#501858"/><rect x="216" y="168" width="1" height="1" fill="#501858"/><rect x="218" y="168" width="1" height="1" fill="#501858"/><rect x="224" y="168" width="1" height="1" fill="#501858"/><rect x="228" y="168" width="1" height="1" fill="#501858"/><rect x="295" y="167" width="1" height="1" fill="#501858"/><rect x="296" y="167" width="1" height="1" fill="#501858"/><rect x="306" y="167" width="1" height="1" fill="#501858"/><rect x="307" y="167" width="1" height="1" fill="#501858"/><rect x="311" y="167" width="1" height="1" fill="#501858"/><rect x="314" y="167" width="1" height="1" fill="#501858"/><rect x="319" y="167" width="1" height="1" fill="#501858"/><rect x="320" y="167" width="1" height="1" fill="#501858"/><rect x="328" y="167" width="1" height="1" fill="#501858"/><rect x="330" y="167" width="1" height="1" fill="#501858"/><rect x="338" y="167" width="1" height="1" fill="#501858"/><rect x="341" y="167" width="1" height="1" fill="#501858"/><rect x="342" y="167" width="1" height="1" fill="#501858"/><rect x="345" y="167" width="1" height="1" fill="#501858"/><rect x="352" y="167" width="1" height="1" fill="#501858"/><rect x="353" y="167" width="1" height="1" fill="#501858"/><rect x="354" y="167" width="1" height="1" fill="#501858"/><rect x="358" y="167" width="1" height="1" fill="#501858"/><rect x="364" y="167" width="1" height="1" fill="#501858"/><rect x="443" y="167" width="1" height="1" fill="#501858"/><rect x="453" y="167" width="1" height="1" fill="#501858"/><rect x="455" y="167" width="1" height="1" fill="#501858"/><rect x="458" y="167" width="1" height="1" fill="#501858"/><rect x="463" y="167" width="1" height="1" fill="#501858"/><rect x="464" y="167" width="1" height="1" fill="#501858"/><rect x="467" y="167" width="1" height="1" fill="#501858"/><rect x="468" y="167" width="1" height="1" fill="#501858"/><rect x="475" y="167" width="1" height="1" fill="#501858"/><rect x="483" y="167" width="1" height="1" fill="#501858"/><rect x="489" y="167" width="1" height="1" fill="#501858"/><rect x="490" y="167" width="1" height="1" fill="#501858"/><rect x="492" y="167" width="1" height="1" fill="#501858"/><rect x="493" y="167" width="1" height="1" fill="#501858"/><rect x="501" y="167" width="1" height="1" fill="#501858"/><rect x="502" y="167" width="1" height="1" fill="#501858"/><rect x="504" y="167" width="1" height="1" fill="#501858"/><rect x="509" y="167" width="1" height="1" fill="#501858"/><rect x="510" y="167" width="1" height="1" fill="#501858"/><rect x="512" y="167" width="1" height="1" fill="#501858"/><rect x="514" y="167" width="1" height="1" fill="#501858"/><rect x="515" y="167" width="1" height="1" fill="#501858"/><rect x="516" y="167" width="1" height="1" fill="#501858"/><rect x="524" y="167" width="1" height="1" fill="#501858"/><rect x="72" y="199" width="29" height="1" fill="#a81010"/><rect x="101" y="198" width="52" height="1" fill="#a81010"/><rect x="153" y="199" width="64" height="1" fill="#a81010"/><rect x="217" y="200" width="124" height="1" fill="#a81010"/><rect x="341" y="199" width="37" height="1" fill="#a81010"/><rect x="378" y="198" width="26" height="1" fill="#a81010"/><rect x="404" y="197" width="45" height="1" fill="#a81010"/><rect x="449" y="196" width="37" height="1" fill="#a81010"/><rect x="486" y="195" width="39" height="1" fill="#a81010"/><rect x="96" y="200" width="1" height="1" fill="#a81010"/><rect x="97" y="200" width="1" height="1" fill="#a81010"/><rect x="100" y="200" width="1" height="1" fill="#a81010"/><rect x="101" y="199" width="1" height="1" fill="#a81010"/><rect x="110" y="199" width="1" height="1" fill="#a81010"/><rect x="113" y="199" width="1" height="1" fill="#a81010"/><rect x="454" y="197" width="1" height="1" fill="#a81010"/><rect x="72" y="251" width="351" height="1" fill="#246a92"/><rect x="423" y="250" width="3" height="1" fill="#246a92"/><rect x="426" y="251" width="60" height="1" fill="#246a92"/><rect x="486" y="250" width="4" height="1" fill="#246a92"/><rect x="490" y="251" width="7" height="1" fill="#246a92"/><rect x="497" y="250" width="6" height="1" fill="#246a92"/><rect x="503" y="251" width="4" height="1" fill="#246a92"/><rect x="507" y="250" width="18" height="1" fill="#246a92"/><rect x="72" y="448" width="453" height="1" fill="#000080"/><rect x="277" y="447" width="1" height="1" fill="#000080"/><rect x="280" y="447" width="1" height="1" fill="#000080"/><rect x="281" y="447" width="1" height="1" fill="#000080"/><rect x="283" y="447" width="1" height="1" fill="#000080"/><rect x="285" y="447" width="1" height="1" fill="#000080"/><rect x="286" y="447" width="1" height="1" fill="#000080"/><rect x="288" y="447" width="1" height="1" fill="#000080"/><rect x="289" y="447" width="1" height="1" fill="#000080"/><rect x="295" y="447" width="1" height="1" fill="#000080"/><rect x="297" y="447" width="1" height="1" fill="#000080"/><rect x="298" y="447" width="1" height="1" fill="#000080"/><rect x="435" y="449" width="1" height="1" fill="#000080"/><rect x="438" y="449" width="1" height="1" fill="#000080"/><rect x="440" y="449" width="1" height="1" fill="#000080"/><rect x="441" y="449" width="1" height="1" fill="#000080"/><rect x="442" y="449" width="1" height="1" fill="#000080"/><rect x="445" y="449" width="1" height="1" fill="#000080"/><rect x="72" y="216" width="127" height="3" fill="#000"/><rect x="73" y="219" width="1" height="1" fill="#000"/><rect x="74" y="219" width="1" height="1" fill="#000"/><rect x="75" y="219" width="1" height="1" fill="#000"/><rect x="76" y="219" width="1" height="1" fill="#000"/><rect x="77" y="219" width="1" height="1" fill="#000"/><rect x="78" y="219" width="1" height="1" fill="#000"/><rect x="79" y="219" width="1" height="1" fill="#000"/><rect x="81" y="219" width="1" height="1" fill="#000"/><rect x="82" y="219" width="1" height="1" fill="#000"/><rect x="84" y="219" width="1" height="1" fill="#000"/><rect x="85" y="219" width="1" height="1" fill="#000"/><rect x="86" y="219" width="1" height="1" fill="#000"/><rect x="87" y="219" width="1" height="1" fill="#000"/><rect x="88" y="219" width="1" height="1" fill="#000"/><rect x="89" y="219" width="1" height="1" fill="#000"/><rect x="92" y="219" width="1" height="1" fill="#000"/><rect x="93" y="219" width="1" height="1" fill="#000"/><rect x="94" y="219" width="1" height="1" fill="#000"/><rect x="95" y="219" width="1" height="1" fill="#000"/><rect x="98" y="219" width="1" height="1" fill="#000"/><rect x="99" y="219" width="1" height="1" fill="#000"/><rect x="100" y="219" width="1" height="1" fill="#000"/><rect x="101" y="219" width="1" height="1" fill="#000"/><rect x="103" y="219" width="1" height="1" fill="#000"/><rect x="105" y="219" width="1" height="1" fill="#000"/><rect x="106" y="219" width="1" height="1" fill="#000"/><rect x="107" y="219" width="1" height="1" fill="#000"/><rect x="108" y="219" width="1" height="1" fill="#000"/><rect x="109" y="219" width="1" height="1" fill="#000"/><rect x="110" y="219" width="1" height="1" fill="#000"/><rect x="111" y="219" width="1" height="1" fill="#000"/><rect x="112" y="219" width="1" height="1" fill="#000"/><rect x="113" y="219" width="1" height="1" fill="#000"/><rect x="114" y="219" width="1" height="1" fill="#000"/><rect x="115" y="219" width="1" height="1" fill="#000"/><rect x="116" y="219" width="1" height="1" fill="#000"/><rect x="117" y="219" width="1" height="1" fill="#000"/><rect x="118" y="219" width="1" height="1" fill="#000"/><rect x="119" y="219" width="1" height="1" fill="#000"/><rect x="120" y="219" width="1" height="1" fill="#000"/><rect x="121" y="219" width="1" height="1" fill="#000"/><rect x="122" y="219" width="1" height="1" fill="#000"/><rect x="123" y="219" width="1" height="1" fill="#000"/><rect x="124" y="219" width="1" height="1" fill="#000"/><rect x="125" y="219" width="1" height="1" fill="#000"/><rect x="126" y="219" width="1" height="1" fill="#000"/><rect x="127" y="219" width="1" height="1" fill="#000"/><rect x="129" y="219" width="1" height="1" fill="#000"/><rect x="131" y="219" width="1" height="1" fill="#000"/><rect x="132" y="219" width="1" height="1" fill="#000"/><rect x="135" y="219" width="1" height="1" fill="#000"/><rect x="136" y="219" width="1" height="1" fill="#000"/><rect x="138" y="219" width="1" height="1" fill="#000"/><rect x="141" y="219" width="1" height="1" fill="#000"/><rect x="142" y="219" width="1" height="1" fill="#000"/><rect x="143" y="219" width="1" height="1" fill="#000"/><rect x="144" y="219" width="1" height="1" fill="#000"/><rect x="145" y="219" width="1" height="1" fill="#000"/><rect x="147" y="219" width="1" height="1" fill="#000"/><rect x="149" y="219" width="1" height="1" fill="#000"/><rect x="150" y="219" width="1" height="1" fill="#000"/><rect x="151" y="219" width="1" height="1" fill="#000"/><rect x="152" y="219" width="1" height="1" fill="#000"/><rect x="153" y="219" width="1" height="1" fill="#000"/><rect x="154" y="219" width="1" height="1" fill="#000"/><rect x="157" y="219" width="1" height="1" fill="#000"/><rect x="158" y="219" width="1" height="1" fill="#000"/><rect x="160" y="219" width="1" height="1" fill="#000"/><rect x="161" y="219" width="1" height="1" fill="#000"/><rect x="162" y="219" width="1" height="1" fill="#000"/><rect x="163" y="219" width="1" height="1" fill="#000"/><rect x="164" y="219" width="1" height="1" fill="#000"/><rect x="165" y="219" width="1" height="1" fill="#000"/><rect x="166" y="219" width="1" height="1" fill="#000"/><rect x="167" y="219" width="1" height="1" fill="#000"/><rect x="168" y="219" width="1" height="1" fill="#000"/><rect x="169" y="219" width="1" height="1" fill="#000"/><rect x="170" y="219" width="1" height="1" fill="#000"/><rect x="171" y="219" width="1" height="1" fill="#000"/><rect x="175" y="219" width="1" height="1" fill="#000"/><rect x="176" y="219" width="1" height="1" fill="#000"/><rect x="178" y="219" width="1" height="1" fill="#000"/><rect x="180" y="219" width="1" height="1" fill="#000"/><rect x="181" y="219" width="1" height="1" fill="#000"/><rect x="182" y="219" width="1" height="1" fill="#000"/><rect x="183" y="219" width="1" height="1" fill="#000"/><rect x="184" y="219" width="1" height="1" fill="#000"/><rect x="185" y="219" width="1" height="1" fill="#000"/><rect x="186" y="219" width="1" height="1" fill="#000"/><rect x="188" y="219" width="1" height="1" fill="#000"/><rect x="189" y="219" width="1" height="1" fill="#000"/><rect x="190" y="219" width="1" height="1" fill="#000"/><rect x="191" y="219" width="1" height="1" fill="#000"/><rect x="192" y="219" width="1" height="1" fill="#000"/><rect x="193" y="219" width="1" height="1" fill="#000"/><rect x="194" y="219" width="1" height="1" fill="#000"/><rect x="195" y="219" width="1" height="1" fill="#000"/><rect x="198" y="219" width="1" height="1" fill="#000"/><rect x="72" y="220" width="1" height="3" fill="#000"/><rect x="73" y="220" width="1" height="3" fill="#000"/><rect x="75" y="220" width="1" height="3" fill="#000"/><rect x="76" y="220" width="1" height="3" fill="#000"/><rect x="81" y="220" width="1" height="3" fill="#000"/><rect x="82" y="220" width="1" height="3" fill="#000"/><rect x="83" y="220" width="1" height="3" fill="#000"/><rect x="199" y="219" width="164" height="4" fill="#000"/><rect x="202" y="216" width="3" height="3" fill="#000"/><rect x="205" y="223" width="1" height="1" fill="#000"/><rect x="211" y="223" width="1" height="1" fill="#000"/><rect x="217" y="223" width="1" height="1" fill="#000"/><rect x="223" y="223" width="1" height="1" fill="#000"/><rect x="229" y="223" width="1" height="1" fill="#000"/><rect x="235" y="223" width="1" height="1" fill="#000"/><rect x="241" y="223" width="1" height="1" fill="#000"/><rect x="247" y="223" width="1" height="1" fill="#000"/><rect x="253" y="223" width="1" height="1" fill="#000"/><rect x="259" y="223" width="1" height="1" fill="#000"/><rect x="265" y="223" width="1" height="1" fill="#000"/><rect x="271" y="223" width="1" height="1" fill="#000"/><rect x="277" y="223" width="1" height="1" fill="#000"/><rect x="283" y="223" width="1" height="1" fill="#000"/><rect x="289" y="223" width="1" height="1" fill="#000"/><rect x="295" y="223" width="1" height="1" fill="#000"/><rect x="301" y="223" width="1" height="1" fill="#000"/><rect x="307" y="223" width="1" height="1" fill="#000"/><rect x="313" y="223" width="1" height="1" fill="#000"/><rect x="319" y="223" width="1" height="1" fill="#000"/><rect x="325" y="223" width="1" height="1" fill="#000"/><rect x="331" y="223" width="1" height="1" fill="#000"/><rect x="337" y="223" width="1" height="1" fill="#000"/><rect x="343" y="223" width="1" height="1" fill="#000"/><rect x="349" y="223" width="1" height="1" fill="#000"/><rect x="355" y="223" width="1" height="1" fill="#000"/><rect x="361" y="223" width="1" height="1" fill="#000"/><rect x="363" y="216" width="162" height="3" fill="#000"/><rect x="364" y="219" width="1" height="1" fill="#000"/><rect x="365" y="219" width="1" height="1" fill="#000"/><rect x="366" y="219" width="1" height="1" fill="#000"/><rect x="367" y="219" width="1" height="1" fill="#000"/><rect x="370" y="219" width="1" height="1" fill="#000"/><rect x="375" y="219" width="1" height="1" fill="#000"/><rect x="378" y="219" width="1" height="1" fill="#000"/><rect x="381" y="219" width="1" height="1" fill="#000"/><rect x="383" y="219" width="1" height="1" fill="#000"/><rect x="384" y="219" width="1" height="1" fill="#000"/><rect x="385" y="219" width="1" height="1" fill="#000"/><rect x="386" y="219" width="1" height="1" fill="#000"/><rect x="387" y="219" width="1" height="1" fill="#000"/><rect x="388" y="219" width="1" height="1" fill="#000"/><rect x="389" y="219" width="1" height="1" fill="#000"/><rect x="390" y="219" width="1" height="1" fill="#000"/><rect x="392" y="219" width="1" height="1" fill="#000"/><rect x="393" y="219" width="1" height="1" fill="#000"/><rect x="394" y="219" width="1" height="1" fill="#000"/><rect x="395" y="219" width="1" height="1" fill="#000"/><rect x="396" y="219" width="1" height="1" fill="#000"/><rect x="397" y="219" width="1" height="1" fill="#000"/><rect x="399" y="219" width="1" height="1" fill="#000"/><rect x="403" y="219" width="1" height="1" fill="#000"/><rect x="404" y="219" width="1" height="1" fill="#000"/><rect x="406" y="219" width="1" height="1" fill="#000"/><rect x="407" y="219" width="1" height="1" fill="#000"/><rect x="408" y="219" width="1" height="1" fill="#000"/><rect x="409" y="219" width="1" height="1" fill="#000"/><rect x="410" y="219" width="1" height="1" fill="#000"/><rect x="411" y="219" width="1" height="1" fill="#000"/><rect x="412" y="219" width="1" height="1" fill="#000"/><rect x="414" y="219" width="1" height="1" fill="#000"/><rect x="415" y="219" width="1" height="1" fill="#000"/><rect x="417" y="219" width="1" height="1" fill="#000"/><rect x="419" y="219" width="1" height="1" fill="#000"/><rect x="421" y="219" width="1" height="1" fill="#000"/><rect x="422" y="219" width="1" height="1" fill="#000"/><rect x="424" y="219" width="1" height="1" fill="#000"/><rect x="426" y="219" width="1" height="1" fill="#000"/><rect x="427" y="219" width="1" height="1" fill="#000"/><rect x="428" y="219" width="1" height="1" fill="#000"/><rect x="429" y="219" width="1" height="1" fill="#000"/><rect x="430" y="219" width="1" height="1" fill="#000"/><rect x="431" y="219" width="1" height="1" fill="#000"/><rect x="433" y="219" width="1" height="1" fill="#000"/><rect x="434" y="219" width="1" height="1" fill="#000"/><rect x="435" y="219" width="1" height="1" fill="#000"/><rect x="436" y="219" width="1" height="1" fill="#000"/><rect x="437" y="219" width="1" height="1" fill="#000"/><rect x="438" y="219" width="1" height="1" fill="#000"/><rect x="439" y="219" width="1" height="1" fill="#000"/><rect x="440" y="219" width="1" height="1" fill="#000"/><rect x="442" y="219" width="1" height="1" fill="#000"/><rect x="443" y="219" width="1" height="1" fill="#000"/><rect x="444" y="219" width="1" height="1" fill="#000"/><rect x="445" y="219" width="1" height="1" fill="#000"/><rect x="446" y="219" width="1" height="1" fill="#000"/><rect x="448" y="219" width="1" height="1" fill="#000"/><rect x="451" y="219" width="1" height="1" fill="#000"/><rect x="454" y="219" width="1" height="1" fill="#000"/><rect x="456" y="219" width="1" height="1" fill="#000"/><rect x="457" y="219" width="1" height="1" fill="#000"/><rect x="459" y="219" width="1" height="1" fill="#000"/><rect x="460" y="219" width="1" height="1" fill="#000"/><rect x="463" y="219" width="1" height="1" fill="#000"/><rect x="466" y="219" width="1" height="1" fill="#000"/><rect x="467" y="219" width="1" height="1" fill="#000"/><rect x="468" y="219" width="1" height="1" fill="#000"/><rect x="469" y="219" width="1" height="1" fill="#000"/><rect x="470" y="219" width="1" height="1" fill="#000"/><rect x="471" y="219" width="1" height="1" fill="#000"/><rect x="472" y="219" width="1" height="1" fill="#000"/><rect x="473" y="219" width="1" height="1" fill="#000"/><rect x="474" y="219" width="1" height="1" fill="#000"/><rect x="475" y="219" width="1" height="1" fill="#000"/><rect x="476" y="219" width="1" height="1" fill="#000"/><rect x="477" y="219" width="1" height="1" fill="#000"/><rect x="478" y="219" width="1" height="1" fill="#000"/><rect x="479" y="219" width="1" height="1" fill="#000"/><rect x="481" y="219" width="1" height="1" fill="#000"/><rect x="485" y="219" width="1" height="1" fill="#000"/><rect x="486" y="219" width="1" height="1" fill="#000"/><rect x="489" y="219" width="1" height="1" fill="#000"/><rect x="490" y="219" width="1" height="1" fill="#000"/><rect x="491" y="219" width="1" height="1" fill="#000"/><rect x="492" y="219" width="1" height="1" fill="#000"/><rect x="493" y="219" width="1" height="1" fill="#000"/><rect x="494" y="219" width="1" height="1" fill="#000"/><rect x="495" y="219" width="1" height="1" fill="#000"/><rect x="497" y="219" width="1" height="1" fill="#000"/><rect x="498" y="219" width="1" height="1" fill="#000"/><rect x="502" y="219" width="1" height="1" fill="#000"/><rect x="503" y="219" width="1" height="1" fill="#000"/><rect x="504" y="219" width="1" height="1" fill="#000"/><rect x="505" y="219" width="1" height="1" fill="#000"/><rect x="506" y="219" width="1" height="1" fill="#000"/><rect x="507" y="219" width="1" height="1" fill="#000"/><rect x="508" y="219" width="1" height="1" fill="#000"/><rect x="509" y="219" width="1" height="1" fill="#000"/><rect x="510" y="219" width="1" height="1" fill="#000"/><rect x="511" y="219" width="1" height="1" fill="#000"/><rect x="512" y="219" width="1" height="1" fill="#000"/><rect x="513" y="219" width="1" height="1" fill="#000"/><rect x="514" y="219" width="1" height="1" fill="#000"/><rect x="515" y="219" width="1" height="1" fill="#000"/><rect x="516" y="219" width="1" height="1" fill="#000"/><rect x="517" y="219" width="1" height="1" fill="#000"/><rect x="520" y="219" width="1" height="1" fill="#000"/><rect x="521" y="219" width="1" height="1" fill="#000"/><rect x="523" y="219" width="1" height="1" fill="#000"/><rect x="412" y="219" width="1" height="3" fill="#000"/><rect x="412" y="216" width="1" height="1" fill="#fff"/><rect x="413" y="219" width="1" height="4" fill="#000"/><rect x="413" y="216" width="1" height="1" fill="#fff"/><rect x="414" y="219" width="1" height="3" fill="#000"/><rect x="414" y="216" width="1" height="1" fill="#fff"/><rect x="415" y="219" width="1" height="4" fill="#000"/><rect x="415" y="216" width="1" height="1" fill="#fff"/><rect x="416" y="219" width="1" height="3" fill="#000"/><rect x="416" y="216" width="1" height="1" fill="#fff"/><rect x="417" y="219" width="1" height="4" fill="#000"/><rect x="418" y="219" width="1" height="4" fill="#000"/><rect x="419" y="219" width="1" height="3" fill="#000"/><rect x="420" y="219" width="1" height="4" fill="#000"/><rect x="421" y="219" width="1" height="4" fill="#000"/><rect x="422" y="219" width="1" height="4" fill="#000"/><rect x="422" y="216" width="1" height="1" fill="#fff"/><rect x="423" y="219" width="1" height="3" fill="#000"/><rect x="423" y="216" width="1" height="1" fill="#fff"/><rect x="424" y="219" width="1" height="3" fill="#000"/><rect x="425" y="219" width="1" height="3" fill="#000"/><rect x="426" y="219" width="1" height="4" fill="#000"/><rect x="426" y="216" width="1" height="1" fill="#fff"/><rect x="427" y="219" width="1" height="4" fill="#000"/><rect x="428" y="219" width="1" height="3" fill="#000"/><rect x="428" y="216" width="1" height="1" fill="#fff"/><rect x="429" y="219" width="1" height="4" fill="#000"/><rect x="429" y="216" width="1" height="1" fill="#fff"/><rect x="431" y="219" width="1" height="4" fill="#000"/><rect x="431" y="216" width="1" height="1" fill="#fff"/><rect x="434" y="219" width="1" height="3" fill="#000"/><rect x="434" y="216" width="1" height="1" fill="#fff"/><rect x="435" y="219" width="1" height="4" fill="#000"/><rect x="439" y="219" width="1" height="4" fill="#000"/><rect x="442" y="219" width="1" height="4" fill="#000"/><rect x="443" y="219" width="1" height="3" fill="#000"/><rect x="443" y="216" width="1" height="1" fill="#fff"/><rect x="444" y="219" width="1" height="3" fill="#000"/><rect x="448" y="219" width="1" height="4" fill="#000"/><rect x="449" y="219" width="1" height="3" fill="#000"/><rect x="449" y="216" width="1" height="1" fill="#fff"/><rect x="450" y="219" width="1" height="4" fill="#000"/><rect x="450" y="216" width="1" height="1" fill="#fff"/><rect x="452" y="219" width="1" height="4" fill="#000"/><rect x="452" y="216" width="1" height="1" fill="#fff"/><rect x="453" y="219" width="1" height="4" fill="#000"/><rect x="454" y="219" width="1" height="4" fill="#000"/><rect x="455" y="219" width="1" height="3" fill="#000"/><rect x="455" y="216" width="1" height="1" fill="#fff"/><rect x="456" y="219" width="1" height="3" fill="#000"/><rect x="458" y="219" width="1" height="4" fill="#000"/><rect x="413" y="213" width="1" height="3" fill="#000"/><rect x="450" y="213" width="1" height="3" fill="#000"/></svg>
<div class="mono" style="left:0px;width:63px;text-align:right;top:130px;color:#800000">0.5</div>
<div class="mono" style="left:0px;width:63px;text-align:right;top:164px;color:#800000">1.5</div>
<div class="mono" style="left:0px;width:63px;text-align:right;top:198px;color:#800000">2.5</div>
<div class="mono" style="left:0px;width:63px;text-align:right;top:232px;color:#800000">3.5</div>
<div class="mono" style="left:0px;width:63px;text-align:right;top:266px;color:#800000">4.5</div>
<div class="mono" style="left:0px;width:63px;text-align:right;top:300px;color:#800000">5.5</div>
<div class="mono" style="left:0px;width:63px;text-align:right;top:334px;color:#800000">6.5</div>
<div class="mono" style="left:0px;width:63px;text-align:right;top:368px;color:#800000">7.5</div>
<div class="mono" style="left:0px;width:63px;text-align:right;top:402px;color:#800000">8.5</div>
<div class="mono" style="left:0px;width:63px;text-align:right;top:436px;color:#800000">9.5</div>
<div class="mono" style="left:0px;width:63px;text-align:right;top:470px;color:#800000">10.5</div>
<div class="mono" style="left:55px;top:118px;color:#800000">Y1</div>
<div class="mono" style="left:76px;top:500px;color:#000">2025/10/27</div>
<div class="mono" style="left:76px;top:513px;color:#000">5:55:21.1</div>
<div class="mono" style="left:152px;top:500px;color:#000">2025/10/27</div>
<div class="mono" style="left:152px;top:513px;color:#000">8:55:21.1</div>
<div class="mono" style="left:227px;top:500px;color:#000">2025/10/27</div>
<div class="mono" style="left:227px;top:513px;color:#000">11:55:21.1</div>
<div class="mono" style="left:303px;top:500px;color:#000">2025/10/27</div>
<div class="mono" style="left:303px;top:513px;color:#000">14:55:21.1</div>
<div class="mono" style="left:379px;top:500px;color:#000">2025/10/27</div>
<div class="mono" style="left:379px;top:513px;color:#000">17:55:21.1</div>
<div class="mono" style="left:454px;top:500px;color:#000">2025/10/27</div>
<div class="mono" style="left:454px;top:513px;color:#000">20:55:21.1</div>
<div class="mono" style="left:530px;top:500px;color:#000">2025/10/27</div>
<div class="mono" style="left:530px;top:513px;color:#000">23:55:21.1</div>
<div style="position:absolute;left:22px;top:545px;width:580px;height:40px;background:#fff"></div>
<div style="position:absolute;left:22px;top:545px;width:95px;height:40px;overflow:hidden"><div class="mono" style="left:1px;top:3px;color:#33cc33">RFD-10MS<svg class="g" width="13" height="7.8" viewBox="0 0 13 12" preserveAspectRatio="none" style="top:-1px"><path d="M1 1H4M0 3H5M1 5H4M1 7H4M1 9H4V11H1V9M6 3H11M7 5H9M8 5V10M6 10L9 9M9 1Q9 8 11 11M10 1L11 2" transform="translate(0.5 0.5)" fill="none" stroke="currentColor" stroke-width="1" vector-effect="non-scaling-stroke" stroke-linecap="square"/></svg><svg class="g" width="13" height="7.8" viewBox="0 0 13 12" preserveAspectRatio="none" style="top:-1px"><path d="M3 1V11M1 2L2 3M5 2L4 3M1 5H5M3 6L1 10M3 6L5 9M7 2L8 3M7 4L8 5M6 7H11M10 1V11" transform="translate(0.5 0.5)" fill="none" stroke="currentColor" stroke-width="1" vector-effect="non-scaling-stroke" stroke-linecap="square"/></svg><svg class="g" width="13" height="7.8" viewBox="0 0 13 12" preserveAspectRatio="none" style="top:-1px"><path d="M6 0V1M1 3V2H11V3M3 4H9M6 4L3 7H9M8 6L9 7M3 9H9M6 7V11M1 11H11" transform="translate(0.5 0.5)" fill="none" stroke="currentColor" stroke-width="1" vector-effect="non-scaling-stroke" stroke-linecap="square"/></svg></div><div class="mono" style="left:1px;top:16px;color:#33cc33">CH1 [mV]</div><div class="mono" style="left:1px;top:29px;color:#33cc33">-0.0</div></div>
<div style="position:absolute;left:118px;top:545px;width:97px;height:40px;overflow:hidden"><div class="mono" style="left:1px;top:3px;color:#246a92">FDU-2110<svg class="g" width="13" height="7.8" viewBox="0 0 13 12" preserveAspectRatio="none" style="top:-1px"><path d="M1 1H4M0 3H5M1 5H4M1 7H4M1 9H4V11H1V9M6 3H11M7 5H9M8 5V10M6 10L9 9M9 1Q9 8 11 11M10 1L11 2" transform="translate(0.5 0.5)" fill="none" stroke="currentColor" stroke-width="1" vector-effect="non-scaling-stroke" stroke-linecap="square"/></svg><svg class="g" width="13" height="7.8" viewBox="0 0 13 12" preserveAspectRatio="none" style="top:-1px"><path d="M3 1V11M1 2L2 3M5 2L4 3M1 5H5M3 6L1 10M3 6L5 9M7 2L8 3M7 4L8 5M6 7H11M10 1V11" transform="translate(0.5 0.5)" fill="none" stroke="currentColor" stroke-width="1" vector-effect="non-scaling-stroke" stroke-linecap="square"/></svg><svg class="g" width="13" height="7.8" viewBox="0 0 13 12" preserveAspectRatio="none" style="top:-1px"><path d="M6 0V1M1 3V2H11V3M3 4H9M6 4L3 7H9M8 6L9 7M3 9H9M6 7V11M1 11H11" transform="translate(0.5 0.5)" fill="none" stroke="currentColor" stroke-width="1" vector-effect="non-scaling-stroke" stroke-linecap="square"/></svg></div><div class="mono" style="left:1px;top:16px;color:#246a92">CH2 [mV]</div><div class="mono" style="left:1px;top:29px;color:#246a92">3.9</div></div>
<div style="position:absolute;left:216px;top:545px;width:96px;height:40px;overflow:hidden"><div class="mono" style="left:1px;top:3px;color:#000080">HALL</div><div class="mono" style="left:1px;top:16px;color:#000080">CH3 [mV]</div><div class="mono" style="left:1px;top:29px;color:#000080">9.8</div></div>
<div style="position:absolute;left:313px;top:545px;width:95px;height:40px;overflow:hidden"><div class="mono" style="left:1px;top:3px;color:#b01010">FDU-830<svg class="g" width="13" height="7.8" viewBox="0 0 13 12" preserveAspectRatio="none" style="top:-1px"><path d="M1 1H4M0 3H5M1 5H4M1 7H4M1 9H4V11H1V9M6 3H11M7 5H9M8 5V10M6 10L9 9M9 1Q9 8 11 11M10 1L11 2" transform="translate(0.5 0.5)" fill="none" stroke="currentColor" stroke-width="1" vector-effect="non-scaling-stroke" stroke-linecap="square"/></svg><svg class="g" width="13" height="7.8" viewBox="0 0 13 12" preserveAspectRatio="none" style="top:-1px"><path d="M3 1V11M1 2L2 3M5 2L4 3M1 5H5M3 6L1 10M3 6L5 9M7 2L8 3M7 4L8 5M6 7H11M10 1V11" transform="translate(0.5 0.5)" fill="none" stroke="currentColor" stroke-width="1" vector-effect="non-scaling-stroke" stroke-linecap="square"/></svg><svg class="g" width="13" height="7.8" viewBox="0 0 13 12" preserveAspectRatio="none" style="top:-1px"><path d="M6 0V1M1 3V2H11V3M3 4H9M6 4L3 7H9M8 6L9 7M3 9H9M6 7V11M1 11H11" transform="translate(0.5 0.5)" fill="none" stroke="currentColor" stroke-width="1" vector-effect="non-scaling-stroke" stroke-linecap="square"/></svg></div><div class="mono" style="left:1px;top:16px;color:#b01010">CH4 [mV]</div><div class="mono" style="left:1px;top:29px;color:#b01010">2.3</div></div>
<div style="position:absolute;left:409px;top:545px;width:97px;height:40px;overflow:hidden"><div class="mono" style="left:1px;top:3px;color:#5a1a6a">FDU-830<svg class="g" width="13" height="7.8" viewBox="0 0 13 12" preserveAspectRatio="none" style="top:-1px"><path d="M5 1V11M5 5L9 7" transform="translate(0.5 0.5)" fill="none" stroke="currentColor" stroke-width="1" vector-effect="non-scaling-stroke" stroke-linecap="square"/></svg><svg class="g" width="13" height="7.8" viewBox="0 0 13 12" preserveAspectRatio="none" style="top:-1px"><path d="M3 1H9M2 4H10Q10 9 4 11" transform="translate(0.5 0.5)" fill="none" stroke="currentColor" stroke-width="1" vector-effect="non-scaling-stroke" stroke-linecap="square"/></svg><svg class="g" width="13" height="7.8" viewBox="0 0 13 12" preserveAspectRatio="none" style="top:-1px"><path d="M3 5L4 7M6 5L7 7M10 4V6Q10 9 5 11" transform="translate(0.5 0.5)" fill="none" stroke="currentColor" stroke-width="1" vector-effect="non-scaling-stroke" stroke-linecap="square"/></svg><svg class="g" width="13" height="7.8" viewBox="0 0 13 12" preserveAspectRatio="none" style="top:-1px"><path d="M1 3H8Q8 8 3 11M10 1A1 1 0 1 1 10 3A1 1 0 1 1 10 1" transform="translate(0.5 0.5)" fill="none" stroke="currentColor" stroke-width="1" vector-effect="non-scaling-stroke" stroke-linecap="square"/></svg></div><div class="mono" style="left:1px;top:16px;color:#5a1a6a">CH5 [mV]</div><div class="mono" style="left:1px;top:29px;color:#5a1a6a">1.4</div></div>
<div style="position:absolute;left:507px;top:545px;width:95px;height:40px;overflow:hidden"><div class="mono" style="left:1px;top:3px;color:#000000">FDU-2110<svg class="g" width="13" height="7.8" viewBox="0 0 13 12" preserveAspectRatio="none" style="top:-1px"><path d="M5 1V11M5 5L9 7" transform="translate(0.5 0.5)" fill="none" stroke="currentColor" stroke-width="1" vector-effect="non-scaling-stroke" stroke-linecap="square"/></svg><svg class="g" width="13" height="7.8" viewBox="0 0 13 12" preserveAspectRatio="none" style="top:-1px"><path d="M3 1H9M2 4H10Q10 9 4 11" transform="translate(0.5 0.5)" fill="none" stroke="currentColor" stroke-width="1" vector-effect="non-scaling-stroke" stroke-linecap="square"/></svg><svg class="g" width="13" height="7.8" viewBox="0 0 13 12" preserveAspectRatio="none" style="top:-1px"><path d="M3 5L4 7M6 5L7 7M10 4V6Q10 9 5 11" transform="translate(0.5 0.5)" fill="none" stroke="currentColor" stroke-width="1" vector-effect="non-scaling-stroke" stroke-linecap="square"/></svg><svg class="g" width="13" height="7.8" viewBox="0 0 13 12" preserveAspectRatio="none" style="top:-1px"><path d="M1 3H8Q8 8 3 11M10 1A1 1 0 1 1 10 3A1 1 0 1 1 10 1" transform="translate(0.5 0.5)" fill="none" stroke="currentColor" stroke-width="1" vector-effect="non-scaling-stroke" stroke-linecap="square"/></svg></div><div class="mono" style="left:1px;top:16px;color:#000000">CH6 [mV]</div><div class="mono" style="left:1px;top:29px;color:#000000">2.9</div></div>
<div style="position:absolute;left:117px;top:545px;width:1px;height:40px;background:#d4d0c8"></div>
<div style="position:absolute;left:215px;top:545px;width:1px;height:40px;background:#d4d0c8"></div>
<div style="position:absolute;left:312px;top:545px;width:1px;height:40px;background:#d4d0c8"></div>
<div style="position:absolute;left:408px;top:545px;width:1px;height:40px;background:#d4d0c8"></div>
<div style="position:absolute;left:506px;top:545px;width:1px;height:40px;background:#d4d0c8"></div>
</body></html>
